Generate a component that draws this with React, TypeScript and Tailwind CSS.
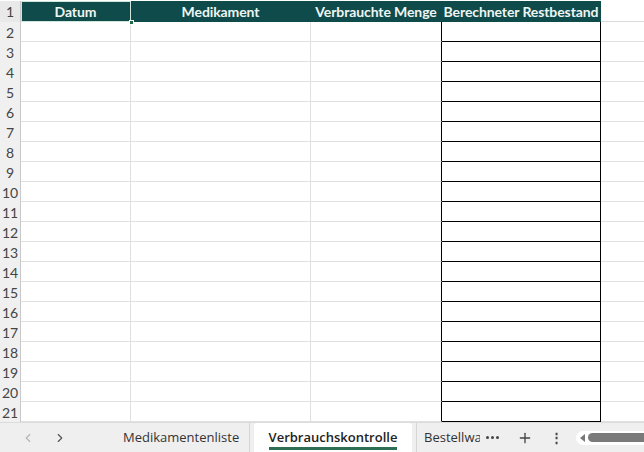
import { ChevronLeft, ChevronRight, Plus } from 'lucide-react';

const rows = Array.from({ length: 20 }, (_, i) => i + 2);

const headers = [
  { name: 'Datum', w: 'w-[110px]' },
  { name: 'Medikament', w: 'w-[180px]' },
  { name: 'Verbrauchte Menge', w: 'w-[131px]' },
  { name: 'Berechneter Restbestand', w: 'w-[159px]' },
];

export default function App() {
  return (
    <div className="w-[644px] h-[452px] overflow-hidden flex flex-col bg-white" style={{ fontFamily: 'Lato, "Liberation Sans", sans-serif' }}>
      {/* Grid */}
      <div className="flex flex-col pt-px">
        {/* Header row */}
        <div className="flex h-[21px]">
          <div className="w-[21px] shrink-0 bg-[#e9e9e9] border-r border-[#c8c8c8] text-[14px] text-[#444] flex items-center justify-center">1</div>
          {headers.map((h, i) => (
            <div
              key={h.name}
              className={`${h.w} shrink-0 relative bg-[#0e4b4a] text-[#eef5f3] font-bold text-[14px] tracking-[-0.1px] flex items-center justify-center whitespace-nowrap overflow-hidden border-r border-[#0e4b4a] ${
                i === 0 ? 'outline outline-1 -outline-offset-1 outline-[#cfe6da]' : ''
              }`}
            >
              {h.name}
            </div>
          ))}
          <div className="flex-1 border-b border-[#dadada]" />
        </div>

        {/* Body rows */}
        {rows.map((r) => (
          <div key={r} className="flex h-[20px]">
            <div className="w-[21px] shrink-0 bg-[#f0f0f0] border-r border-[#c8c8c8] text-[14px] text-[#444] flex items-center justify-center">{r}</div>
            <div className="w-[110px] shrink-0 border-r border-b border-[#e0e0e0]" />
            <div className="w-[180px] shrink-0 border-r border-b border-[#e0e0e0]" />
            <div className="w-[131px] shrink-0 border-b border-[#e0e0e0] border-r border-r-black" />
            <div className="w-[159px] shrink-0 border-r border-b border-black" />
            <div className="flex-1 border-b border-[#e0e0e0]" />
          </div>
        ))}
      </div>

      {/* Fill handle over A1 */}
      <div className="absolute left-[129px] top-[20px] w-[5px] h-[5px] bg-[#1f6b45] border border-white" />

      {/* Sheet tabs */}
      <div className="flex-1 flex items-center bg-[#efefef] border-t border-[#dcdcdc] text-[13px] text-[#333]" style={{ fontFamily: '"Open Sans", "Noto Sans", sans-serif' }}>
        <div className="w-[110px] shrink-0 flex items-center gap-[18px] pl-[21px]">
          <ChevronLeft size={14} className="text-[#b5b5b5]" />
          <ChevronRight size={14} className="text-[#555]" />
        </div>
        <div className="w-[140px] shrink-0 h-full flex items-center pl-[13px] border-r border-[#d6d6d6]">Medikamentenliste</div>
        <div className="w-[158px] shrink-0 h-full flex items-center justify-center bg-white mx-[4px] rounded-t-[3px]">
          <span className="font-semibold text-[#222] border-b-[3px] border-[#2e6e55] leading-[20px] pt-[2px]">Verbrauchskontrolle</span>
        </div>
        <div className="w-[64px] shrink-0 h-full flex items-center pl-[7px] border-l border-[#d6d6d6] overflow-hidden whitespace-nowrap">Bestellwa</div>
        <div className="w-[24px] shrink-0 flex items-center justify-center gap-[2px]">
          <span className="w-[3px] h-[3px] rounded-full bg-[#444]" />
          <span className="w-[3px] h-[3px] rounded-full bg-[#444]" />
          <span className="w-[3px] h-[3px] rounded-full bg-[#444]" />
        </div>
        <div className="w-[42px] shrink-0 flex items-center justify-center">
          <Plus size={16} className="text-[#444]" />
        </div>
        <div className="w-[20px] shrink-0 flex items-center justify-center text-[#444] font-bold">⋮</div>
        <div className="flex-1 flex items-center h-[14px] bg-white rounded-l-full ml-[10px] pl-[4px] gap-[3px]">
          <div className="w-0 h-0 border-y-[4px] border-y-transparent border-r-[5px] border-r-[#777]" />
          <div className="flex-1 h-[9px] rounded-l-full bg-[#7a7a7a]" />
        </div>
      </div>
    </div>
  );
}
